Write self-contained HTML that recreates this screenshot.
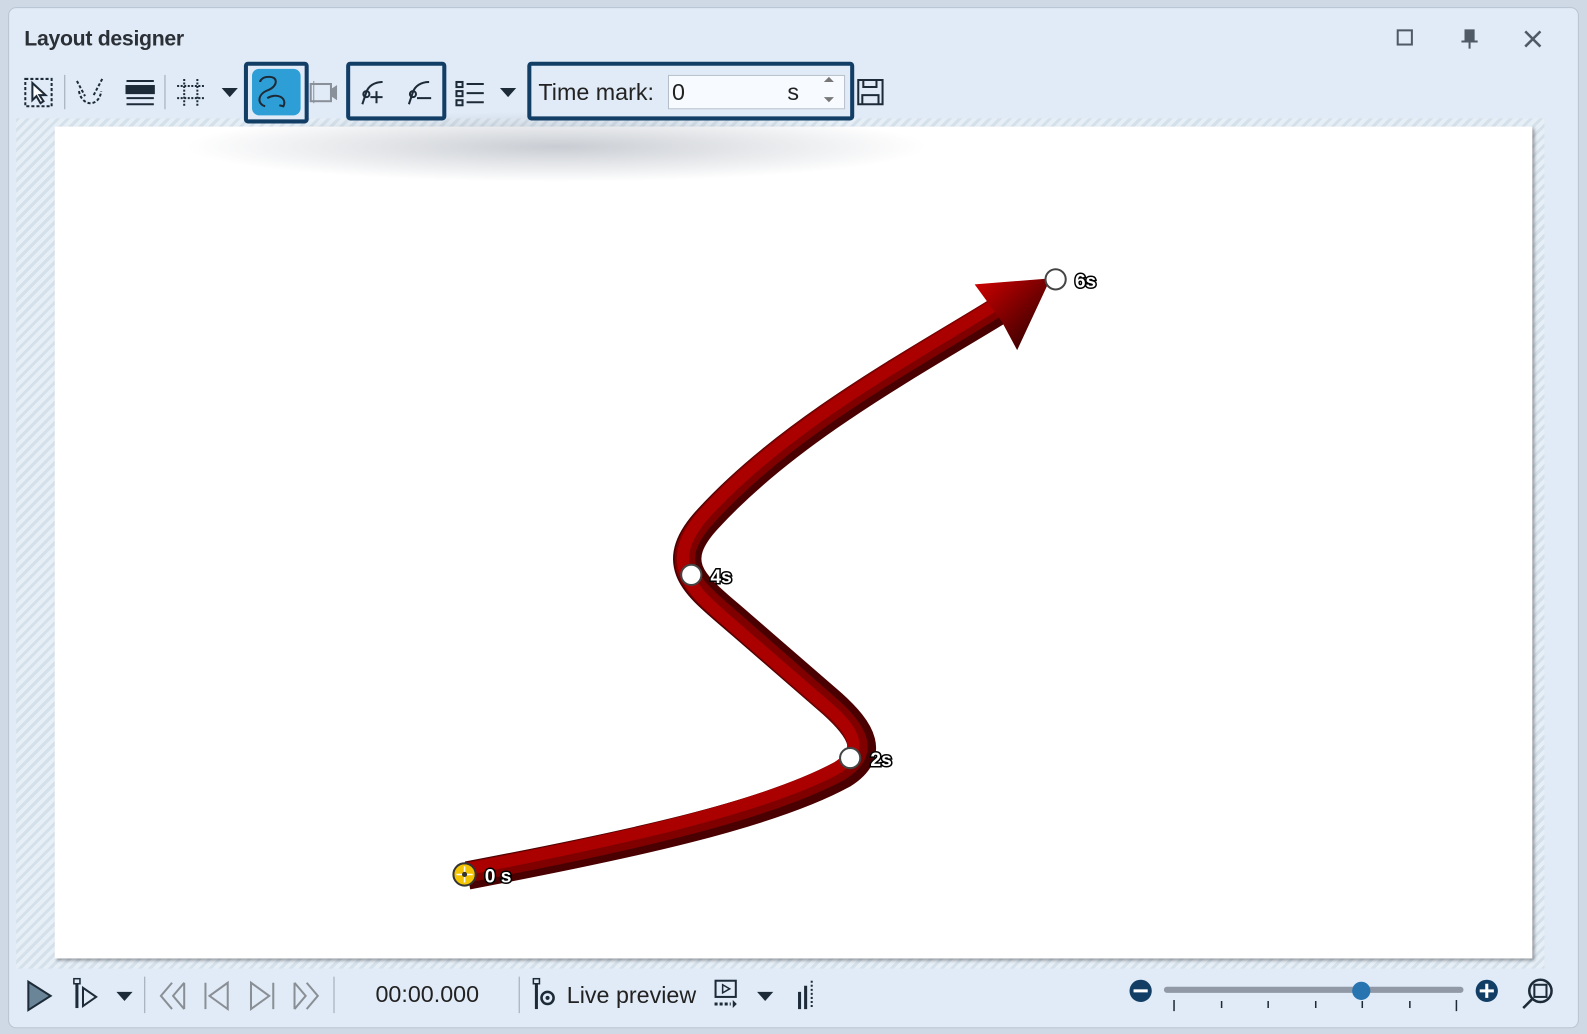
<!DOCTYPE html>
<html><head><meta charset="utf-8"><style>
body{margin:0;width:1587px;height:1034px;background:#cfd9e5;font-family:"Liberation Sans",sans-serif;overflow:hidden;position:relative}
#root{position:absolute;left:0;top:0;width:1568px;height:1022px;transform:scale(1.0121);transform-origin:0 0}
.win{position:absolute;left:8px;top:7px;width:1550px;height:1007px;background:#e1ebf7;border:1px solid #b8c4d2;border-radius:8px}
.title{position:absolute;left:24px;top:27px;font-size:21px;font-weight:bold;color:#2b2f36;letter-spacing:-0.3px}
.hatch{position:absolute;left:16px;top:117px;width:1510px;height:840px;background:repeating-linear-gradient(135deg,#d4e0ea 0 3px,#e6eef6 3px 7px)}
.canvas{position:absolute;left:54px;top:125px;width:1460px;height:822px;background:#fff;box-shadow:2px 2px 3px rgba(0,0,0,.35)}
.box{position:absolute;border:4px solid #123e66;border-radius:4px;box-sizing:border-box}
svg{position:absolute;left:0;top:0}
.lbl{font-family:"Liberation Sans",sans-serif;font-weight:bold;font-size:19px;fill:#fff;stroke:#000;stroke-width:3px;paint-order:stroke}
</style></head><body><div id="root">
<div class="win"></div>
<div class="title">Layout designer</div>
<div class="hatch"></div>
<div class="canvas"></div>
<div style="position:absolute;left:180px;top:110px;width:740px;height:70px;background:radial-gradient(ellipse at center,rgba(120,130,145,.4),rgba(255,255,255,0) 70%)"></div>
<div class="box" style="left:241px;top:61px;width:64px;height:61px;background:#e1ebf7"></div>
<div style="position:absolute;left:249px;top:68px;width:48px;height:46px;background:#2e9fd6;border-radius:7px"></div>
<div class="box" style="left:342px;top:61px;width:99px;height:58px;background:#e1ebf7"></div>
<div class="box" style="left:521px;top:61px;width:323px;height:58px;background:#e1ebf7"></div>
<div style="position:absolute;left:532px;top:78px;font-size:23px;color:#222">Time mark:</div>
<div style="position:absolute;left:660px;top:74px;width:175px;height:34px;background:#f7fbff;border:1px solid #b5bfc9;box-sizing:border-box"></div>
<div style="position:absolute;left:664px;top:78px;font-size:23px;color:#222">0</div>
<div style="position:absolute;left:778px;top:78px;font-size:23px;color:#222">s</div>
<div style="position:absolute;left:371px;top:969px;font-size:23px;color:#222">00:00.000</div>
<div style="position:absolute;left:560px;top:970px;font-size:23px;color:#222">Live preview</div>
<svg width="1568" height="1022" viewBox="0 0 1568 1022">
<defs>
<linearGradient id="g" x1="0" y1="0" x2="1" y2="1"><stop offset="0" stop-color="#d40000"/><stop offset="1" stop-color="#1a0000"/></linearGradient>
</defs>
<rect x="1381" y="30" width="14" height="14" fill="none" stroke="#4f5a66" stroke-width="2"/>
<path d="M1448,30h8v10h-8z M1444,41h16 M1452,41v7" fill="#4f5a66" stroke="#4f5a66" stroke-width="2"/>
<path d="M1507,31l15,15M1522,31l-15,15" stroke="#4f5a66" stroke-width="2.5"/>
<g fill="none" stroke="#1d2b38" stroke-width="2">
<rect x="25" y="78" width="26" height="27" stroke-dasharray="3 2"/>
<path d="M32,82l0,17 4,-4 4,7 3,-2 -4,-6 6,0z" fill="#fff"/>
<path d="M76,80l8,15M101,78l-9,17M78,90c3,16 20,16 22,0" stroke-dasharray="3 2"/>
<path d="M125,80h27M125,97h27M125,103h27" /><rect x="125" y="85" width="27" height="7" fill="#1d2b38"/>
<path d="M175,85h28M175,97h28M182,78v27M195,78v27" stroke-dasharray="2 1.5"/>
<path d="M262,105c-8,-2 -8,-12 3,-16 10,-4 10,-14 0,-13 -5,0 -8,3 -8,5M264,97c10,-6 20,0 16,8l-4,-1"/>
<path d="M358,103l4,-12c2,-6 8,-10 16,-10M366,96h12M372,90v12"/><circle cx="362" cy="93" r="3"/>
<path d="M404,103l4,-12c2,-6 8,-10 16,-10M412,97h14"/><circle cx="408" cy="93" r="3"/>
<rect x="451" y="81" width="6" height="5"/><rect x="451" y="90" width="6" height="5"/><rect x="451" y="99" width="6" height="5"/>
<path d="M461,83h17M461,92h17M461,101h17"/>
<path d="M848,79h24v24h-24z M853,79v7h13v-7 M852,103v-9h16v9"/>
</g>
<path d="M310,80v22" stroke="#8a9099"/><rect x="307" y="83" width="20" height="17" fill="none" stroke="#8a9099" stroke-width="2"/><path d="M327,88l6,-4v15l-6,-4z" fill="#8a9099"/>
<path d="M64,74v34M163,74v34" stroke="#9aa6b2"/>
<path d="M219,87h16l-8,9z M494,87h16l-8,9z" fill="#1d2b38"/>
<path d="M814,81l5,-5 5,5z M814,96l5,5 5,-5z" fill="#777"/>
<path d="M28,970l22,14 -22,14z" fill="#6b8598" stroke="#1d2b38" stroke-width="2"/>
<path d="M76,972v24" stroke="#1d2b38" stroke-width="3"/><rect x="73" y="967" width="6" height="5" fill="none" stroke="#1d2b38" stroke-width="1.5"/>
<path d="M82,976l13,9 -13,9z" fill="none" stroke="#1d2b38" stroke-width="2"/>
<path d="M115,980h16l-8,9z M748,980h16l-8,9z" fill="#1d2b38"/>
<path d="M143,965v36M330,965v36M513,965v36" stroke="#9aa6b2"/>
<g fill="none" stroke="#8a8f96" stroke-width="2">
<path d="M170,971l-11,13 11,13M182,971l-11,13 11,13M182,971v26"/>
<path d="M203,971v26M225,971l-18,13 18,13z"/>
<path d="M270,971v26M248,971l18,13 -18,13z"/>
<path d="M291,971l11,13 -11,13M303,971l11,13 -11,13M291,971v26"/>
</g>
<path d="M530,972v25" stroke="#1d2b38" stroke-width="3"/><rect x="527" y="967" width="6" height="5" fill="none" stroke="#1d2b38" stroke-width="1.5"/>
<circle cx="541" cy="986" r="6" fill="none" stroke="#1d2b38" stroke-width="2.5"/><circle cx="541" cy="986" r="2" fill="#1d2b38"/>
<rect x="707" y="969" width="20" height="16" fill="none" stroke="#1d2b38" stroke-width="2"/><path d="M714,973l7,4 -7,4z" fill="none" stroke="#1d2b38" stroke-width="1.5"/>
<path d="M706,992h16" stroke="#1d2b38" stroke-width="3" stroke-dasharray="3 2"/><path d="M724,988l4,4 -4,4z" fill="#1d2b38"/>
<path d="M790,980v17M796,974v23" stroke="#1d2b38" stroke-width="3"/><path d="M802,969v28" stroke="#1d2b38" stroke-width="2" stroke-dasharray="2 2"/>
<circle cx="1127" cy="979" r="11" fill="#123e66"/><path d="M1120,979h14" stroke="#fff" stroke-width="3"/>
<rect x="1150" y="975" width="296" height="6" rx="3" fill="#9099a5"/>
<circle cx="1345" cy="979" r="9" fill="#2874b0"/>
<circle cx="1469" cy="979" r="11" fill="#123e66"/><path d="M1462,979h14M1469,972v14" stroke="#fff" stroke-width="3"/>
<g stroke="#1d2b38" stroke-width="1.5"><path d="M1160,988v11M1207,989v7M1253,989v7M1300,989v7M1346,989v7M1393,989v7M1439,988v11"/></g>
<circle cx="1522" cy="979" r="11" fill="none" stroke="#1d2b38" stroke-width="2.5"/><rect x="1516" y="973" width="12" height="12" fill="none" stroke="#1d2b38" stroke-width="2"/><path d="M1514,987l-9,9" stroke="#1d2b38" stroke-width="2.5"/>
<path d="M462,865C620,835 760,805 833,765C865,745 852,722 822,695L732,617C690,580 655,560 700,512C780,425 900,360 990,305" fill="none" stroke="#4a0000" stroke-width="28"/>
<path d="M461,862C620,832 756,801 829,762C860,743 848,722 818,696L729,618C688,582 653,560 697,511C776,423 897,358 987,302" fill="none" stroke="#800000" stroke-width="20"/>
<path d="M460,859C620,828 752,798 825,760C855,742 845,722 815,697L726,620C686,585 652,560 694,510C773,422 895,356 985,300" fill="none" stroke="#aa0000" stroke-width="12"/>
<path d="M963,281L1038,275L1005,346L990,318z" fill="url(#g)"/>
<circle cx="1043" cy="276" r="10" fill="#fff" stroke="#444" stroke-width="2"/>
<circle cx="683" cy="568" r="10" fill="#fff" stroke="#444" stroke-width="2"/>
<circle cx="840" cy="749" r="10" fill="#fff" stroke="#444" stroke-width="2"/>
<circle cx="459" cy="864" r="11" fill="#f5c400" stroke="#333" stroke-width="2"/>
<path d="M459,856v16M451,864h16" stroke="#fff" stroke-width="1.5"/><circle cx="459" cy="864" r="2.5" fill="#333"/>
<text class="lbl" x="1062" y="284">6s</text>
<text class="lbl" x="702" y="576">4s</text>
<text class="lbl" x="860" y="757">2s</text>
<text class="lbl" x="479" y="872">0 s</text>
</svg>
</div></body></html>
